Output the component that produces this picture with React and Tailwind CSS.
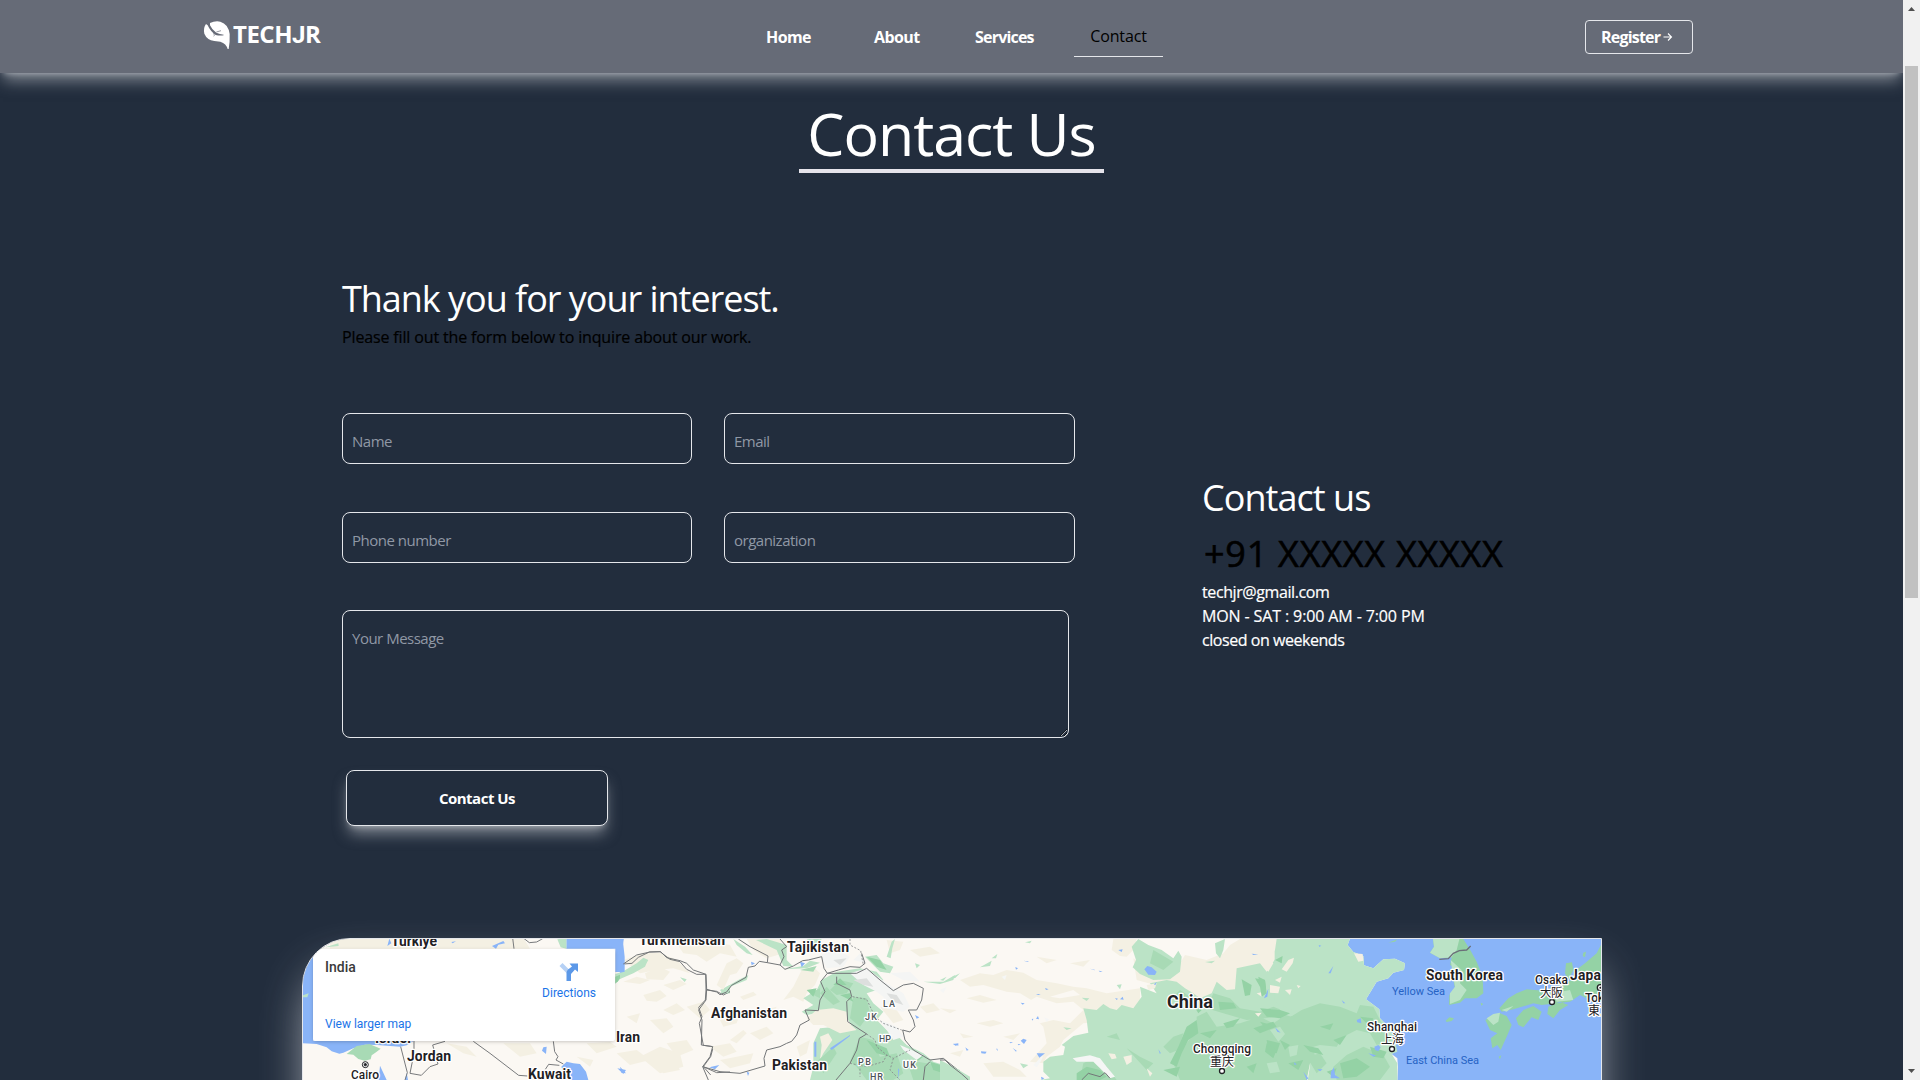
import React from "react";

const GREEN = "#bbe3c6";
const MID = "#a8dab5";
const DARK = "#94d2a5";
const WATER = "#89b4f8";
const SAND = "#f4f0e3";
const LAND = "#fbf8f3";

function Label({ x, y, w, size = 14, weight = 700, fill = "#1f2124", halo = true, children }) {
  return (
    <text
      x={x}
      y={y}
      textLength={w}
      fontSize={size}
      fontWeight={weight}
      fill={fill}
      stroke={halo ? "#ffffff" : "none"}
      strokeWidth={halo ? 2.5 : 0}
      strokeLinejoin="round"
      paintOrder="stroke"
    >
      {children}
    </text>
  );
}

function WestAsia() {
  return (
    <g transform="translate(290 910) scale(0.33333)">
      <g fill={SAND}>
        <path d="M120 84H700L720 116H120Z" />
        <path d="M1000 150L1060 130 1110 128 1160 150 1200 190 1150 175 1100 180 1050 190Z" />
        <path d="M1000 215L1040 200 1080 210 1050 222ZM1120 225L1170 210 1190 222 1150 240ZM1060 255L1110 240 1130 258 1100 275 1070 272ZM1120 300L1160 280 1185 300 1150 315ZM1190 290L1240 275 1260 300 1230 325ZM1080 330L1130 325 1150 350 1120 370 1100 350ZM1130 400L1190 390 1210 420 1160 440ZM980 430L1040 420 1080 450 1020 465ZM1090 460L1150 450 1170 480 1120 490Z" />
        <path d="M470 400L530 410 560 440 520 430ZM640 400L720 400 740 430 690 440ZM890 400L960 396 980 410 920 430ZM860 440L910 450 900 470Z" />
      </g>
      <g fill={WATER}>
        <path d="M0 84H70V392H372L350 406 330 410 262 405 225 404 190 415 160 428 148 431 125 424 110 412 80 402 38 400Z" />
        <path d="M829 84H1002L998 110 990 130 998 150 1002 186 976 186V116H829Z" />
        <path d="M298 86L304 100 292 108ZM484 96L498 94 488 100ZM606 108L640 93 645 100 625 104 618 116ZM270 467L290 510H266ZM350 488L354 510H345ZM760 412L770 410 768 432 756 422ZM814 470L830 455 850 460 870 462 888 485 895 510H840L818 480ZM982 475L1008 480 1000 492Z" />
      </g>
      <g fill={GREEN}>
        <path d="M170 432L200 408 238 402 272 416 256 428 245 436 242 448 224 452 205 447 190 434Z" fill={MID} />
        <path d="M106 112L145 100 146 108ZM802 88L829 84V116L812 112ZM976 192L1000 184 1040 160 1060 143 1075 150 1060 170 1028 188 1000 196 976 222ZM1170 202L1190 208 1184 216ZM1290 240L1320 225V250L1300 252ZM38 256L56 250 52 262H38Z" />
        <path d="M976 200L1000 190 984 214 976 220Z" fill={DARK} />
      </g>
      <path
        d="M700 84L718 98 740 96 758 86M668 84L672 116M1002 162L1026 160 1045 142 1078 126 1110 125 1140 148 1170 155 1190 178 1220 193 1247 193 1248 240 1280 244 1300 255 1320 245M1248 240L1246 270 1226 292 1236 320 1228 340 1240 406 1270 410 1262 440 1240 470 1262 495M1240 470L1280 488 1320 486M550 394L600 430 686 496 712 498M790 394L794 425 804 440 798 450 820 462M372 392L372 430 360 490 394 496 420 470 444 462 428 405 465 394M332 410L352 488 345 510M766 478L776 463 808 466"
        fill="none"
        stroke="#77797b"
        strokeWidth="3"
      />
      <g fill="none" stroke="#202124" strokeWidth="3">
        <circle cx="226" cy="464" r="9" fill="#fff" />
        <circle cx="226" cy="464" r="3.5" fill="#202124" />
      </g>
    </g>
  );
}

function SouthAsia() {
  return (
    <g transform="translate(620 930) scale(0.33333)">
      <g fill={SAND}>
        <path d="M75 130L120 110 150 125 130 150 80 148ZM170 40L250 30 330 45 350 80 300 70 260 95 230 75 190 70ZM320 100L350 85 370 100 350 130 330 135 310 180 290 165Z" />
        <path d="M380 27H480L490 70 440 85 400 60ZM545 120L580 110 600 130 585 165 560 190 550 215 520 200 490 210 520 170ZM360 200L400 185 410 195 370 210ZM300 270L360 250 350 280 310 290ZM330 330L370 300 380 310 350 340ZM270 350L330 340 350 365 310 380ZM390 310L440 290 460 310 420 330ZM400 250L470 230 460 250ZM300 390L350 380 400 370 390 400 330 415ZM530 350L570 330 560 370 540 380ZM20 260L60 250 50 280ZM60 380L120 350 180 370 190 410 120 430Z" />
        <path d="M800 30L850 35 840 60 810 70ZM870 60L930 50 960 70 900 80ZM900 230L940 220 960 240 920 250ZM780 230L830 240 850 270 820 280Z" />
      </g>
      <g fill={GREEN}>
        <path d="M0 130L40 112 68 88 84 90 75 110 40 130 0 147ZM300 190L320 170 355 150 385 135 380 150 330 170 325 190ZM340 27L375 50 398 75 380 70 350 45ZM408 30L440 27 500 45 500 90 520 110 490 108 470 60ZM560 27L605 27 590 50ZM490 118L550 108 570 92 600 98 560 115Z" />
        <path d="M550 205L590 180 605 150 650 125 720 115 770 125 790 150 770 180 740 190 760 220 790 245 770 270 800 300 840 325 860 345 910 370 940 395 1020 420V450H570L580 410 580 340 600 295 650 290 700 300 680 260 630 245 590 250 560 255 545 245 580 225Z" />
        <path d="M735 80L770 75 790 100 820 110 810 130 780 125ZM800 80L815 35 825 27 817 55 812 85ZM910 155L970 155 1005 135 1000 150 960 162ZM885 100L900 105 890 115Z" />
      </g>
      <path d="M600 320L625 310 637 330 610 370 600 390 605 345Z" fill={SAND} />
      <path d="M590 240L640 235 680 245 682 275 710 300 660 310 610 285 580 285 560 265Z" fill={SAND} />
      <g fill={MID}>
        <path d="M630 180L660 150 700 160 680 190 650 195ZM600 190L620 170 660 215 640 225ZM700 200L740 205 750 250 720 290 690 265ZM720 320L760 330 780 380 830 370 850 430 820 450H740L710 410 690 395ZM860 390L920 400 1010 420V450H880ZM570 190L600 175 600 205ZM590 395L640 350 650 370 610 430ZM540 120L590 108 580 125Z" />
      </g>
      <g fill={DARK}>
        <path d="M640 165L660 145 680 165ZM740 80L780 90 800 120 770 110ZM560 180L590 175 580 200ZM740 330L800 355 810 380 770 370ZM930 395L980 410 970 430 940 420ZM870 360L910 380 890 395ZM660 195L690 190 700 215Z" />
      </g>
      <g fill="#f4f5f4">
        <path d="M600 75L650 60 690 80 670 110 620 115ZM690 130L740 115 800 160 850 190 870 230 850 245 800 235 790 200 770 185 730 165ZM780 270L830 290 850 320 820 330ZM840 345L910 375 890 390 850 360ZM720 70L740 100 700 90ZM810 130L870 125 900 155 850 150Z" />
      </g>
      <path d="M700 150L740 145 760 170 730 165ZM800 190L830 195 850 225 820 215ZM640 90L680 85 660 105Z" fill="#dddfde" />
      <path d="M0 27H8L14 80 14 125 0 128ZM540 95L555 100 545 112ZM393 95L405 100 395 106ZM583 335H589V380H583ZM630 355L690 315 690 318 635 360ZM834 415L838 420 835 448ZM885 255L898 262 890 266ZM380 425L388 428 384 438ZM1000 342L1015 340V347ZM0 410L18 430 4 428ZM268 412L298 405 285 418Z" fill={WATER} />
      <path
        d="M10 102L50 75 90 66 122 65 140 83 180 92 200 100 220 120 258 133 260 178 290 186 300 194 320 186 335 166 378 142 385 112 405 108 418 94 442 98 444 78 390 50 355 27M442 98L480 105 492 80 485 60 500 50 480 27M480 105L495 118 520 108 548 92 565 90 605 80 612 115 622 130 655 120 690 110 720 112 735 100 725 70M260 178L258 210 236 240 246 270 244 345 278 350 270 380 248 410 265 450M248 410L300 425 360 430 435 408 432 385 440 360 480 350 500 340 515 334 530 315 540 285 568 270 555 240 595 242 600 210 615 185 602 155 622 130M622 130L660 130 710 130 740 115 780 150 820 182 850 165 880 160 910 175 905 210 890 240 865 240 880 270 885 290 870 306 848 300 855 330 880 360 930 390 970 385 1020 425M650 140L650 160 690 180 695 200 680 215 683 275 740 312 718 325 710 360 690 400 648 450M930 395L915 410 910 450"
        fill="none"
        stroke="#727577"
        strokeWidth="3"
        strokeLinejoin="round"
      />
      <path
        d="M690 27V45L722 62 730 105M698 200L740 208 765 260 790 280 845 300M740 312L765 330 770 350 800 375 820 385 870 360M690 400L740 410 790 395 800 375M720 405L720 440M820 385L810 420 840 450"
        fill="none"
        stroke="#85888a"
        strokeWidth="2.5"
        strokeDasharray="6 5"
      />
    </g>
  );
}

function China() {
  return (
    <g transform="translate(940 930) scale(0.33333)">
      <g fill={SAND}>
        <path d="M520 27H590L580 60 560 80 540 78 515 60ZM580 85L640 130 690 120 720 100 735 75 800 90 850 70 870 45 900 27H1060L1000 180 880 190 780 215 700 180 590 150Z" />
        <path d="M60 150L120 130 160 135 200 120 250 128 290 150 350 160 400 170 440 175 500 190 600 175 600 220 560 270 430 280 370 330 360 350 320 380 310 400 270 395 320 340 310 290 270 250 290 220 240 190 200 185 130 165 90 170Z" />
        <path d="M80 205L120 195 170 210 130 218ZM0 235L50 240 30 250ZM110 280L160 270 190 280 150 290ZM190 320L240 310 220 330ZM60 310L100 320 70 325ZM30 370L70 360 60 380ZM130 400L190 395 240 420 260 440H160ZM290 80L350 90 320 100ZM390 100L450 90 430 110Z" />
      </g>
      <path d="M220 240L290 200 350 220 400 215 430 240 390 280 340 270 300 280ZM330 200L400 180 420 195 360 205Z" fill={LAND} />
      <g fill={GREEN}>
        <path d="M595 27L625 45 665 60 700 85 715 62 725 80 720 125 690 148 640 150 600 132 578 112 588 90 575 50Z" />
        <path d="M430 235L470 240 490 222 510 235 530 240 545 225 580 235 605 200 600 170 650 190 630 160 680 150 710 155 735 175 760 190 780 205 815 190 830 155 860 180 885 178 890 115 960 100 980 125 1010 80 1020 50 1100 20V460H240L330 445 310 425 310 395 330 380 370 375 375 350 365 345 400 318 445 308 440 270Z" />
        <path d="M255 37L275 32 270 40ZM155 85L172 72 168 85ZM120 112L155 92 150 108ZM0 150L20 140 10 152ZM35 142L60 130 45 145ZM825 40L855 27 850 60 840 85 828 70ZM795 96L825 92 815 100ZM530 165L545 163 540 178ZM425 203L448 205 440 213ZM370 292L395 295 380 300ZM240 400L265 405 250 415ZM0 390L40 410 90 440V460H0Z" />
      </g>
      <g fill={MID}>
        <path d="M430 400L470 380 500 410 530 450H420ZM720 450L700 400 740 340 770 300 770 260 800 245 830 290 900 280 960 260 1000 280 1030 260 1100 240V460ZM820 190L870 205 900 235 960 245 1000 230 1050 250 1000 262 920 270 850 250 800 235ZM670 350L700 320 730 310 715 360 690 370ZM560 355L600 380 640 400 620 420ZM640 60L700 95 670 120 630 100ZM500 320L530 310 540 330ZM700 200L720 180 750 200 730 220Z" />
      </g>
      <g fill={DARK}>
        <path d="M905 148L935 165 930 195 915 198ZM945 145L975 150 978 178 960 170ZM835 215L880 218 890 235 840 240ZM740 290L770 270 775 310 745 330 725 370 710 410 690 400 715 350ZM850 280L900 265 880 290 860 295ZM780 310L830 300 810 325ZM940 295L1000 275 1010 290 960 310ZM980 330L1020 340 1010 370 985 365ZM920 410L950 400 940 430ZM670 420L720 410 710 440ZM410 430L440 410 480 420 500 440 480 450H410ZM760 225L785 240 775 250Z" />
      </g>
      <path d="M505 370L525 372 530 385 515 388ZM550 380L575 375 575 395 560 405ZM620 415L637 430 630 440ZM620 165L650 160 645 175 625 180ZM950 190L972 185 965 200ZM945 250L965 248 955 260Z" fill={SAND} />
      <g fill="#f5f6f5">
        <path d="M398 385L450 376 480 385 500 410 525 440 510 445 480 415 460 395 410 395ZM280 405L300 385 310 375 305 390 290 412ZM0 180L20 170 10 190ZM185 140L200 135 195 150ZM312 262L328 268 320 275Z" />
      </g>
      <g fill={WATER}>
        <path d="M613 118L622 108 635 112 650 125 645 135 625 134ZM535 60L548 58 545 66ZM226 111L234 115 228 119ZM450 116L464 119V121ZM476 122L488 124 480 126ZM525 204L534 206 530 210ZM540 208L548 200 551 209ZM242 218L254 220 248 224ZM288 266L294 258 297 268ZM275 267L280 266 278 272ZM315 174L326 178 318 180ZM288 192L302 192 295 195ZM242 332L250 326 260 330 252 342ZM208 336L219 337 212 340ZM233 342L242 342 236 346ZM38 341L53 343 48 348ZM76 352L86 360 80 362ZM123 364L140 365 136 371 124 370ZM168 356L172 356 174 364ZM218 354L230 362 228 365ZM290 370L315 370 298 383ZM303 440L313 445 305 450ZM935 71L955 73 940 75ZM972 205L985 176 982 200ZM655 358L662 368 660 373ZM250 92L265 94V96ZM642 163L650 156 646 166ZM570 187L575 190Z" />
      </g>
      <path d="M0 390L15 390 30 405 65 432 85 450M425 450L445 430 480 440 495 428 510 445" fill="none" stroke="#727577" strokeWidth="3" />
    </g>
  );
}

function EastAsia() {
  return (
    <g transform="translate(1260 930) scale(0.33333)">
      <path
        d="M272 20L263 45 280 66 310 78 312 106 340 115 370 88 405 86 435 100 432 120 400 128 385 145 350 155 335 180 318 208 345 228 358 238 360 265 385 290 405 330 408 358 395 372 412 385 414 410 412 460H1040V20Z"
        fill={WATER}
      />
      <path d="M272 20L263 45 280 66 310 78 312 106 340 115 370 88 405 86 435 100 432 120 400 128 385 145 350 155 335 180 318 208 345 228 358 238 360 265 385 290 405 330 412 365 395 372 412 400V460H150V20Z" fill={GREEN} />
      <path d="M60 20H160V460H142L150 405 120 330 142 300 100 280 60 240Z" fill={GREEN} />
      <path d="M44 20H70V250H110L90 235 60 225 44 215Z" fill={GREEN} />
      <g fill={SAND}>
        <path d="M0 27H50L45 60 25 85 40 100 25 125 10 110 0 80ZM85 90L102 83 98 100 80 125 65 118ZM282 70L308 72 310 92 295 95ZM30 165L60 170 55 190 30 188ZM75 180L95 178 90 195ZM110 165L122 168 115 175ZM45 150L65 140 60 158Z" />
      </g>
      <g fill={MID}>
        <path d="M90 262L125 240 180 220 240 230 290 250 300 225 340 230 360 270 395 330 350 345 330 310 290 300 250 320 230 350 180 345 160 350 165 380 150 400 140 450H60L80 400 60 330ZM60 250L110 265 150 330 150 400 130 450H60ZM260 375L310 350 370 375 390 410 360 450H230L220 410ZM140 380L180 370 200 400 170 430Z" />
      </g>
      <path d="M30 300L60 290 75 312 55 335ZM85 350L115 345 110 375 90 380ZM20 400L50 395 60 425 30 430Z" fill={GREEN} />
      <g fill={DARK}>
        <path d="M0 235L60 240 90 250 60 265 20 260ZM0 275L35 285 20 300ZM130 345L175 355 190 375 150 365ZM240 400L290 385 330 410 290 440 250 445ZM60 330L90 345 75 360ZM330 350L380 365 370 385 340 380ZM-5 140L15 150 20 190 5 200ZM45 90L68 78 65 100ZM20 340L50 360 40 385 15 365ZM85 400L130 390 115 420ZM180 290L220 280 210 300ZM220 330L260 315 240 345ZM300 260L340 265 330 290ZM200 425L230 415 220 440Z" />
      </g>
      <path d="M518 20L522 50 510 68 540 85 575 82 570 105 590 115 580 150 585 175 568 195 567 225 600 218 615 205 650 205 670 190 668 140 650 95 632 62 610 27V20Z" fill={DARK} />
      <path d="M518 20L522 50 510 68 540 85 575 82 590 60 600 20ZM572 90L605 120 600 160 620 180 600 210 570 222 570 190 585 170 578 130Z" fill={GREEN} />
      <g fill={DARK}>
        <path d="M1030 30L1010 70 975 100 955 115 945 145 915 160 850 182 800 178 770 190 745 205 718 235 725 245 760 238 820 220 845 225 890 220 930 215 960 195 990 210 1030 210ZM970 68L978 65 975 82 968 78ZM918 100L936 97 940 120 925 150 915 130ZM768 265L790 240 820 228 845 245 835 270 815 262 790 292 775 285ZM865 230L900 215 925 225 900 240 880 265 862 252ZM676 270L700 258 720 250 740 258 755 285 740 320 722 360 712 345 697 355 692 325 712 310 690 300ZM557 272L568 262 582 265 575 273 560 276ZM702 388L712 390ZM716 380L724 376 720 388ZM385 38L412 28 405 35ZM662 218L670 222 664 227Z" />
      </g>
      <path d="M700 252L720 248 715 275 700 285 680 265ZM880 190L930 180 940 210 890 215ZM725 240L760 228 740 245Z" fill={GREEN} />
      <path d="M538 88L565 86 580 70 598 62 620 60 632 48" fill="none" stroke="#6b6f78" strokeWidth="4" />
      <path d="M205 130L220 108 212 130ZM176 45L184 47 178 51ZM45 292L62 308 52 305ZM290 270L302 265 304 280 292 277ZM343 350L355 345 362 352 355 364 345 360ZM213 425L222 412 225 435 240 445H212ZM245 210L256 220 250 220ZM172 418L188 418 180 424ZM102 397L110 403 104 405ZM325 370L348 376 340 380ZM130 425L145 445 140 450Z" fill={WATER} />
      <g fill="#fff" stroke="#202124" strokeWidth="4">
        <circle cx="396" cy="357" r="7.5" />
        <circle cx="876" cy="216" r="7.5" />
        <circle cx="1021" cy="173" r="9" />
      </g>
      <circle cx="1021" cy="173" r="3" fill="#202124" />
    </g>
  );
}

function MapCanvas() {
  return (
    <svg viewBox="303 939 1298 141" className="block h-[141px] w-[1298px] font-[Roboto,'Noto_Sans_CJK_SC',sans-serif]">
      <rect x="303" y="939" width="1298" height="141" fill={LAND} />
      <WestAsia />
      <SouthAsia />
      <China />
      <EastAsia />
      <circle cx="1222" cy="1071" r="2.5" fill="#fff" stroke="#202124" strokeWidth="1.3" />
      <Label x={391} y={946} w={46}>Türkiye</Label>
      <Label x={639} y={944.5} w={86}>Turkmenistan</Label>
      <Label x={375} y={1043} w={36}>Israel</Label>
      <Label x={407} y={1061} w={44}>Jordan</Label>
      <Label x={528} y={1079} w={43}>Kuwait</Label>
      <Label x={616} y={1042} w={24}>Iran</Label>
      <Label x={351} y={1079} w={28} size={12} weight={500}>Cairo</Label>
      <Label x={787} y={952} w={62}>Tajikistan</Label>
      <Label x={711} y={1018} w={76}>Afghanistan</Label>
      <Label x={772} y={1070} w={55}>Pakistan</Label>
      <Label x={883} y={1006.5} w={12} size={9} weight={500} fill="#4c5357">LA</Label>
      <Label x={865} y={1019.5} w={12} size={9} weight={500} fill="#4c5357">JK</Label>
      <Label x={879} y={1041.5} w={12} size={9} weight={500} fill="#4c5357">HP</Label>
      <Label x={858} y={1064.5} w={13} size={9} weight={500} fill="#4c5357">PB</Label>
      <Label x={903} y={1067.5} w={13} size={9} weight={500} fill="#4c5357">UK</Label>
      <Label x={870} y={1079.5} w={13} size={9} weight={500} fill="#4c5357">HR</Label>
      <Label x={1167} y={1008} w={46} size={18}>China</Label>
      <Label x={1193} y={1053} w={58} size={12} weight={500}>Chongqing</Label>
      <Label x={1210} y={1066} w={24} size={12} weight={400}>重庆</Label>
      <Label x={1426} y={980} w={77}>South Korea</Label>
      <Label x={1392} y={995} w={53} size={11} weight={400} fill="#2663c4" halo={false}>Yellow Sea</Label>
      <Label x={1406} y={1064} w={73} size={11} weight={400} fill="#2663c4" halo={false}>East China Sea</Label>
      <Label x={1367} y={1031} w={50} size={12} weight={500}>Shanghai</Label>
      <Label x={1381} y={1044} w={23} size={12} weight={400}>上海</Label>
      <Label x={1535} y={984} w={33} size={12} weight={500}>Osaka</Label>
      <Label x={1540} y={997} w={23} size={12} weight={400}>大阪</Label>
      <Label x={1570} y={980} w={39}>Japan</Label>
      <Label x={1585} y={1002} w={31} size={12} weight={500}>Tokyo</Label>
      <Label x={1588} y={1015} w={24} size={12} weight={400}>東京</Label>
    </svg>
  );
}

function MapCard() {
  return (
    <div className="absolute left-[10px] top-[10px] flex h-[92px] w-[302px] justify-between rounded-[2px] bg-white pl-3 pr-[19px] font-[Roboto,sans-serif] shadow-[0_1px_4px_-1px_rgba(0,0,0,0.3)]">
      <div className="flex flex-col justify-between pb-[9px] pt-[10px]">
        <span className="text-[14px] font-medium leading-4 text-[#3a3a3a]">India</span>
        <span className="text-[12px] leading-4 text-[#1a73e8]">View larger map</span>
      </div>
      <div className="flex flex-col items-center pt-[13px]">
        <svg viewBox="0 0 20 20" className="h-5 w-5">
          <path d="M0.500 4L3.500 1 10 7.500 8.500 12Z" fill="#b6d1f5" />
          <path d="M7.500 19V11Q7.500 9 9 7.500L13 4.500 10.500 1.500H19V10L16 7.500 12 12V19Z" fill="#5b98e8" />
        </svg>
        <span className="mt-[3px] text-[12px] leading-4 text-[#1a73e8]">Directions</span>
      </div>
    </div>
  );
}

function LeafLogo() {
  return (
    <svg viewBox="70 62 84 90" className="h-[30px] w-[28px]">
      <path
        d="M91 71Q106 64 122 67Q146 74 150 104Q151 128 147 149H144Q140 133 122 127L104 125Q82 122 74 103Q70 86 79 74L84 78Q92 96 108 107Q120 110 132 108V106Q120 105 110 100Q97 92 91 78Z"
        fill="#fff"
      />
      <path d="M101 97L104 108 102 111M110 98L124 94" fill="none" stroke="#666b77" strokeWidth="2" />
    </svg>
  );
}

const fieldBox =
  "h-[51px] rounded-lg border border-gray-200 bg-transparent px-[9px] pt-[4px] text-[15px] tracking-[-0.5px] text-white outline-none placeholder:text-[#9098a5]";

export default function App() {
  return (
    <div className="flex h-[1080px] w-[1920px] overflow-hidden bg-[#222d3d] font-['Open_Sans',sans-serif] text-white">
      <div className="flex w-[1903px] flex-col overflow-hidden">
        <header className="flex h-[73px] shrink-0 items-center bg-[#666b77] shadow-[0_10px_15px_-3px_rgba(229,231,235,0.5),0_4px_6px_-4px_rgba(229,231,235,0.5)]">
          <div className="ml-[203px] flex w-[563px] items-center pb-[4px]">
            <LeafLogo />
            <span className="ml-[2px] text-2xl font-bold leading-8 tracking-[-0.5px]">
              TECH<span className="font-[Roboto,sans-serif]">J</span>R
            </span>
          </div>
          <nav className="flex items-center text-base font-bold">
            <a className="w-[108px] pt-px tracking-[-0.6px]">Home</a>
            <a className="w-[101px] pt-px tracking-[-0.6px]">About</a>
            <a className="w-[99px] pt-px tracking-[-0.8px]">Services</a>
            <a className="flex h-[41px] w-[89px] items-center justify-center border-b border-gray-200 font-normal tracking-[-0.15px] text-black">Contact</a>
          </nav>
          <button className="ml-[422px] flex h-[34px] w-[108px] items-center rounded border border-gray-200 pl-[15px] text-base font-bold tracking-[-0.8px]">
            Register
            <svg viewBox="0 0 10 10" className="ml-[3px] h-[10px] w-[10px]" fill="none" stroke="#fff" strokeWidth="1.1">
              <path d="M0.500 5H8.500M5 1.500L8.500 5 5 8.500" />
            </svg>
          </button>
        </header>

        <main className="flex flex-col">
          <h1 className="mx-auto mt-[24px] flex h-[76px] w-[305px] justify-center whitespace-nowrap border-b-4 border-[#e5e3ea] text-[59px] font-normal leading-[73px] tracking-[-1px]">
            Contact Us
          </h1>

          <div className="ml-[342px] mt-[102px] flex">
            <section className="w-[860px]">
              <h2 className="text-[36px] leading-[48px] tracking-[-1.03px]">Thank you for your interest.</h2>
              <p className="pt-[2px] text-[16px] font-medium leading-6 tracking-[-0.14px] text-black [-webkit-text-stroke:0.2px_black]">
                Please fill out the form below to inquire about our work.
              </p>
              <form className="mt-[64px] flex flex-col">
                <div className="grid grid-cols-[350px_351px] gap-x-8 gap-y-[48px]">
                  <input className={fieldBox} placeholder="Name" />
                  <input className={fieldBox} placeholder="Email" />
                  <input className={fieldBox} placeholder="Phone number" />
                  <input className={fieldBox} placeholder="organization" />
                </div>
                <textarea
                  className="mt-[47px] h-[128px] w-[727px] rounded-lg border border-gray-200 bg-transparent px-[9px] pt-[15px] text-[15px] leading-6 tracking-[-0.5px] outline-none placeholder:text-[#9098a5]"
                  placeholder="Your Message"
                />
                <button
                  type="button"
                  className="ml-1 mt-8 h-[56px] w-[262px] rounded-lg border border-gray-200 bg-[#222d3d] text-[15px] font-bold tracking-[-0.5px] shadow-[0_10px_15px_-3px_rgba(229,231,235,0.5),0_4px_6px_-4px_rgba(229,231,235,0.5)]"
                >
                  Contact Us
                </button>
              </form>
            </section>
            <section className="mt-[199px]">
              <h2 className="text-[36px] leading-[48px] tracking-[-0.95px]">Contact us</h2>
              <p className="mt-2 pl-[2px] text-[36px] font-medium leading-[48px] tracking-[0.75px] text-black [-webkit-text-stroke:0.6px_black]">
                +91 XXXXX XXXXX
              </p>
              <div className="mt-[2px] text-[16px] font-medium leading-6 [-webkit-text-stroke:0.2px_white]">
                <p className="tracking-[-0.4px]">techjr@gmail.com</p>
                <p className="tracking-[-0.12px]">MON - SAT : 9:00 AM - 7:00 PM</p>
                <p className="tracking-[-0.45px]">closed on weekends</p>
              </div>
            </section>
          </div>

          <div className="ml-[302px] mt-[112px] h-[300px] w-[1300px] rounded-tl-[48px] border border-gray-200 shadow-[0_25px_50px_-12px_rgba(229,231,235,0.9)]">
            <div className="relative h-full overflow-hidden rounded-tl-[47px]">
              <MapCanvas />
              <MapCard />
            </div>
          </div>
        </main>
      </div>

      <aside className="flex w-[17px] flex-col items-center bg-[#f1f1f1]">
        <svg viewBox="0 0 17 17" className="h-[17px] w-[17px]">
          <path d="M5 11L8.500 7 12 11Z" fill="#505050" />
        </svg>
        <div className="mt-[49px] h-[532px] w-[13px] bg-[#c1c1c1]" />
        <svg viewBox="0 0 17 17" className="mt-auto h-[17px] w-[17px]">
          <path d="M5 6L8.500 10 12 6Z" fill="#505050" />
        </svg>
      </aside>
    </div>
  );
}
